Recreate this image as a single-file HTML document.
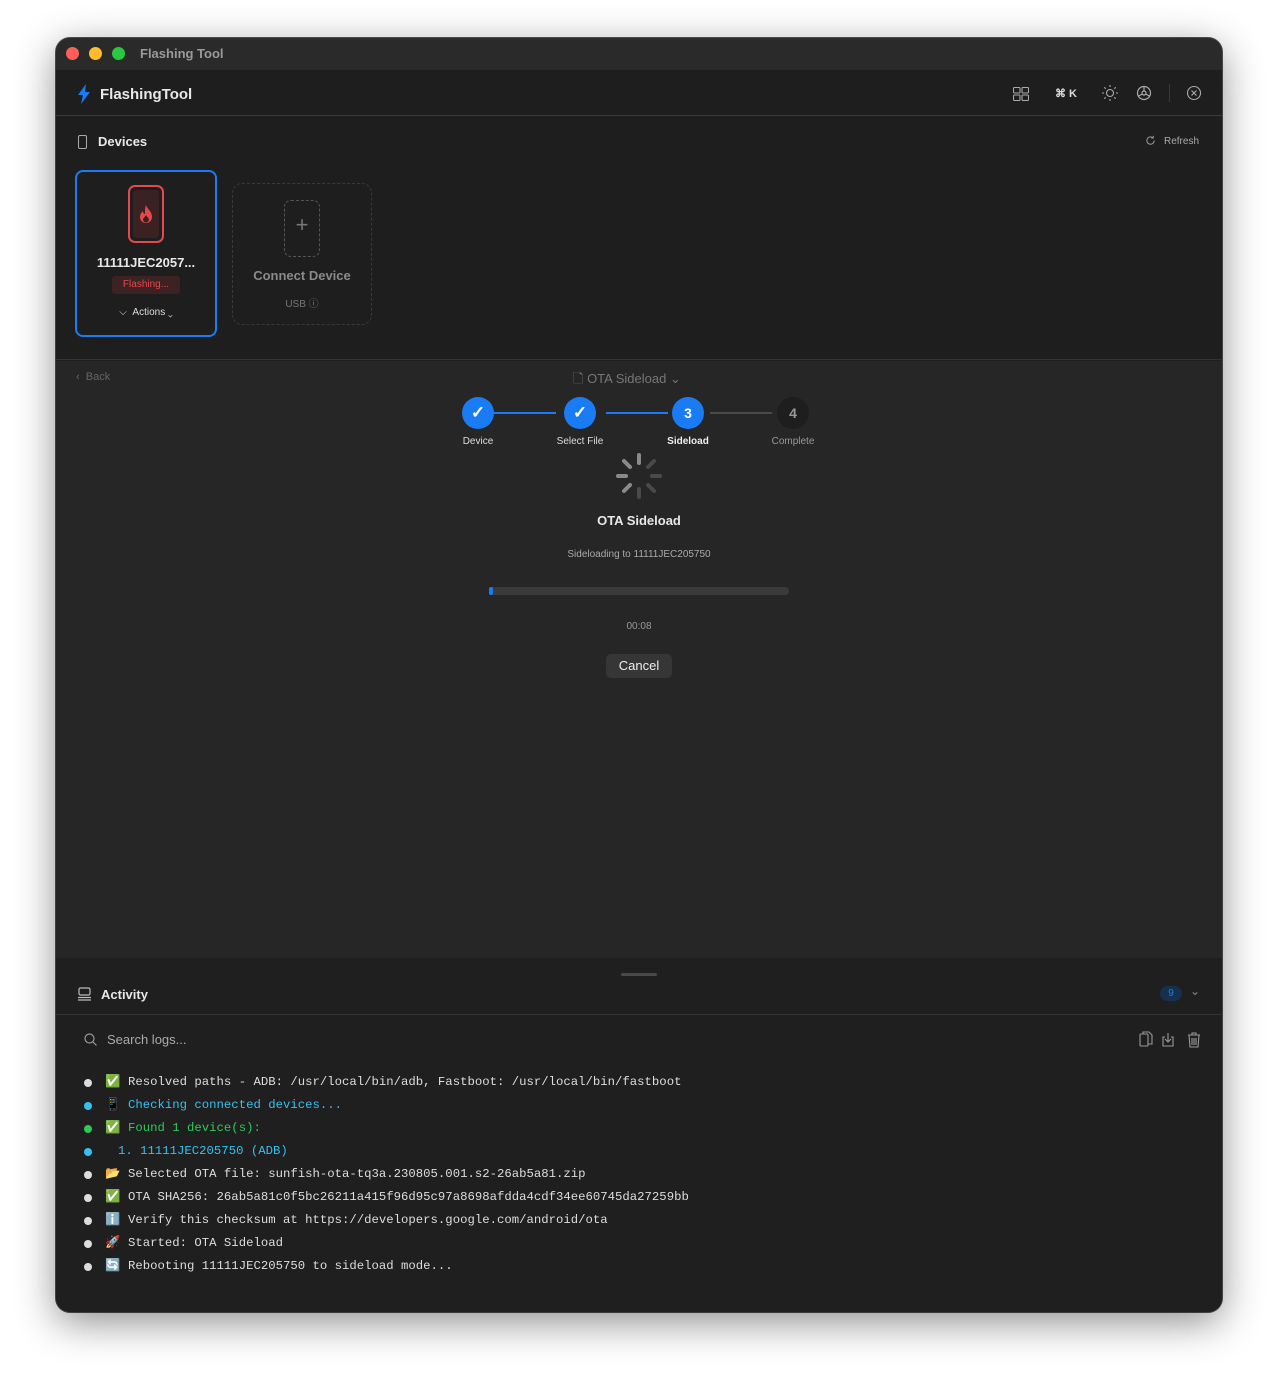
<!DOCTYPE html>
<html><head><meta charset="utf-8"><style>
*{box-sizing:border-box;margin:0;padding:0}
body{width:1278px;height:1387px;background:#fff;font-family:"Liberation Sans",sans-serif;position:relative;overflow:hidden}
.win{position:absolute;left:56px;top:38px;width:1166px;height:1274px;border-radius:14px;background:#1f1f1f;overflow:hidden;box-shadow:0 10px 40px rgba(0,0,0,.45),0 0 0 1px #555}
.abs{position:absolute}
.t{color:#e8e8e8}
.mono{font-family:"Liberation Mono",monospace}
</style></head><body>
<div class="win">
 <div class="abs" style="left:0;top:0;width:1166px;height:32px;background:#2a2a2a"></div>
 <div class="abs" style="left:10px;top:9px;width:13px;height:13px;border-radius:50%;background:#fe5f57"></div>
 <div class="abs" style="left:33px;top:9px;width:13px;height:13px;border-radius:50%;background:#febc2e"></div>
 <div class="abs" style="left:56px;top:9px;width:13px;height:13px;border-radius:50%;background:#28c840"></div>
 <div class="abs" style="left:84px;top:8px;font-size:13px;font-weight:bold;color:#9a9a9a">Flashing Tool</div>
 <div class="abs" style="left:0;top:32px;width:1166px;height:46px;background:#1e1e1e;border-bottom:1px solid #3a3a3a"></div>
 <svg class="abs" style="left:20px;top:46px" width="16" height="20" viewBox="0 0 16 20"><path d="M10 0 L2 11 H7 L5 20 L14 8 H9 Z" fill="#1a7cf5"/></svg>
 <div class="abs t" style="left:44px;top:48px;font-size:15px;font-weight:bold">FlashingTool</div>
 <svg class="abs" style="left:957px;top:49px" width="16" height="14" viewBox="0 0 16 14" fill="none" stroke="#aaa" stroke-width="1.1"><rect x=".5" y=".5" width="6.5" height="5.5" rx="1"/><rect x="9" y=".5" width="6.5" height="5.5" rx="1"/><rect x=".5" y="8" width="6.5" height="5.5" rx="1"/><rect x="9" y="8" width="6.5" height="5.5" rx="1"/></svg>
 <div class="abs" style="left:999px;top:49px;font-size:11px;color:#ddd;font-weight:bold">⌘ K</div>
 <svg class="abs" style="left:1046px;top:47px" width="16" height="16" viewBox="0 0 16 16" stroke="#aaa" stroke-width="1.1" fill="none"><circle cx="8" cy="8" r="3.5"/><path d="M8 0v2M8 14v2M0 8h2M14 8h2M2.3 2.3l1.4 1.4M12.3 12.3l1.4 1.4M2.3 13.7l1.4-1.4M12.3 3.7l1.4-1.4"/></svg>
 <svg class="abs" style="left:1080px;top:47px" width="16" height="16" viewBox="0 0 16 16" stroke="#aaa" stroke-width="1.2" fill="none"><circle cx="8" cy="8" r="6.5"/><circle cx="8" cy="8" r="2"/><path d="M8 1.5v4.5M2.5 11l4-2M13.5 11l-4-2"/></svg>
 <div class="abs" style="left:1113px;top:46px;width:1px;height:18px;background:#3a3a3a"></div>
 <svg class="abs" style="left:1130px;top:47px" width="16" height="16" viewBox="0 0 16 16" stroke="#aaa" stroke-width="1.1" fill="none"><circle cx="8" cy="8" r="6.5"/><path d="M5.5 5.5l5 5M10.5 5.5l-5 5"/></svg>
 <div class="abs" style="left:0;top:79px;width:1166px;height:243px;background:#1e1e1e;border-bottom:1px solid #333"></div>
 <div class="abs" style="left:22px;top:97px;width:9px;height:14px;border:1.5px solid #aaa;border-radius:2px"></div>
 <div class="abs t" style="left:42px;top:96px;font-size:13px;font-weight:bold">Devices</div>
 <svg class="abs" style="left:1089px;top:97px" width="11" height="11" viewBox="0 0 12 12" fill="none" stroke="#999" stroke-width="1.1"><path d="M10 6a4 4 0 1 1-1.5-3.1M9 1v2.2H6.8"/></svg>
 <div class="abs" style="left:1108px;top:98px;font-size:10px;color:#aaa">Refresh</div>
 <div class="abs" style="left:19px;top:132px;width:142px;height:167px;border:2px solid #1a7cf5;border-radius:8px"></div>
 <div class="abs" style="left:72px;top:147px;width:36px;height:58px;border:2px solid #e5484d;border-radius:7px;background:#1e1e1e"></div>
 <div class="abs" style="left:77px;top:152px;width:26px;height:48px;border-radius:4px;background:#3b2222"></div>
 <svg class="abs" style="left:82px;top:166px" width="16" height="20" viewBox="0 0 16 20"><path d="M8 1C9 5 14 7 14 13a6 6 0 0 1-12 0c0-3 2-5 3-6 0 2 1 3 2 3 0-4 0-6 1-9z" fill="#e5484d"/><path d="M8 11c1 2 3 3 3 4.5a3 3 0 0 1-6 0C5 14 7 13 8 11z" fill="#3b2222"/></svg>
 <div class="abs t" style="left:19px;top:217px;width:142px;text-align:center;font-size:13px;font-weight:bold">11111JEC2057...</div>
 <div class="abs" style="left:56px;top:238px;width:68px;height:18px;border-radius:3px;background:#3d2224;color:#e5484d;font-size:10px;text-align:center;line-height:18px">Flashing...</div>
 <div class="abs" style="left:19px;top:269px;width:142px;text-align:center;font-size:10px;color:#ddd">⌵ &nbsp;Actions ⌄</div>
 <div class="abs" style="left:176px;top:145px;width:140px;height:142px;border:1.5px dashed #3a3a3a;border-radius:10px"></div>
 <div class="abs" style="left:228px;top:162px;width:36px;height:57px;border:1.5px dashed #555;border-radius:7px"></div>
 <div class="abs" style="left:238px;top:174px;font-size:22px;color:#777;width:16px;text-align:center">+</div>
 <div class="abs" style="left:176px;top:230px;width:140px;text-align:center;font-size:13px;color:#8a8a8a;font-weight:bold">Connect Device</div>
 <div class="abs" style="left:176px;top:257px;width:140px;text-align:center;font-size:10px;color:#777">USB ⓘ</div>
 <div class="abs" style="left:0;top:323px;width:1166px;height:597px;background:#262626"></div>
 <div class="abs" style="left:20px;top:333px;font-size:11px;color:#666">‹ &nbsp;Back</div>
 <div class="abs" style="left:517px;top:332px;font-size:13px;color:#777">🗋 OTA Sideload ⌄</div>
 <div class="abs" style="left:438px;top:374px;width:62px;height:2px;background:#1a7cf5"></div>
 <div class="abs" style="left:550px;top:374px;width:62px;height:2px;background:#1a7cf5"></div>
 <div class="abs" style="left:654px;top:374px;width:62px;height:2px;background:#4a4a4a"></div>
 <div class="abs" style="left:406px;top:359px;width:32px;height:32px;border-radius:50%;background:#1a7cf5;color:#fff;text-align:center;line-height:32px;font-size:17px;font-weight:bold">✓</div>
 <div class="abs" style="left:508px;top:359px;width:32px;height:32px;border-radius:50%;background:#1a7cf5;color:#fff;text-align:center;line-height:32px;font-size:17px;font-weight:bold">✓</div>
 <div class="abs" style="left:616px;top:359px;width:32px;height:32px;border-radius:50%;background:#1a7cf5;color:#fff;text-align:center;line-height:32px;font-size:14px;font-weight:bold">3</div>
 <div class="abs" style="left:721px;top:359px;width:32px;height:32px;border-radius:50%;background:#1e1e1e;color:#999;text-align:center;line-height:32px;font-size:14px;font-weight:bold">4</div>
 <div class="abs" style="left:382px;top:398px;width:80px;text-align:center;font-size:10px;color:#ddd">Device</div>
 <div class="abs" style="left:484px;top:398px;width:80px;text-align:center;font-size:10px;color:#ddd">Select File</div>
 <div class="abs" style="left:592px;top:398px;width:80px;text-align:center;font-size:10px;color:#eee;font-weight:bold">Sideload</div>
 <div class="abs" style="left:697px;top:398px;width:80px;text-align:center;font-size:10px;color:#999">Complete</div>
 <svg class="abs" style="left:558px;top:414px" width="50" height="48" viewBox="-25 -24 50 48" stroke-width="4" stroke-linecap="round">
  <g stroke="#8a8a8a"><line x1="0" y1="-21" x2="0" y2="-13"/><line x1="-21" y1="0" x2="-13" y2="0"/><line x1="-15" y1="-15" x2="-9" y2="-9"/><line x1="-15" y1="15" x2="-9" y2="9"/></g>
  <g stroke="#4a4a4a"><line x1="15" y1="-15" x2="9" y2="-9"/><line x1="21" y1="0" x2="13" y2="0"/><line x1="15" y1="15" x2="9" y2="9"/><line x1="0" y1="21" x2="0" y2="13"/></g></svg>
 <div class="abs t" style="left:483px;top:475px;width:200px;text-align:center;font-size:13px;font-weight:bold">OTA Sideload</div>
 <div class="abs" style="left:433px;top:511px;width:300px;text-align:center;font-size:10px;color:#aaa">Sideloading to 11111JEC205750</div>
 <div class="abs" style="left:433px;top:549px;width:300px;height:8px;border-radius:4px;background:#3a3a3a"></div>
 <div class="abs" style="left:433px;top:549px;width:4px;height:8px;border-radius:3px;background:#1a7cf5"></div>
 <div class="abs" style="left:533px;top:583px;width:100px;text-align:center;font-size:10px;color:#999">00:08</div>
 <div class="abs" style="left:550px;top:616px;width:66px;height:24px;border-radius:5px;background:#363636;color:#eee;font-size:13px;text-align:center;line-height:24px">Cancel</div>
 <div class="abs" style="left:0;top:920px;width:1166px;height:354px;background:#1f1f1f"></div>
 <div class="abs" style="left:565px;top:935px;width:36px;height:3px;border-radius:2px;background:#4a4a4a"></div>
 <svg class="abs" style="left:22px;top:949px" width="13" height="14" viewBox="0 0 13 14" fill="none" stroke="#bbb" stroke-width="1.2"><rect x="1" y="1" width="11" height="7" rx="1.5"/><path d="M0 10.5h13M0 13h13"/></svg>
 <div class="abs t" style="left:45px;top:949px;font-size:13px;font-weight:bold">Activity</div>
 <div class="abs" style="left:1104px;top:948px;width:22px;height:15px;border-radius:8px;background:#16304f;color:#1a7cf5;font-size:10px;text-align:center;line-height:15px">9</div>
 <div class="abs" style="left:1134px;top:946px;font-size:12px;color:#888">⌄</div>
 <div class="abs" style="left:0;top:976px;width:1166px;height:1px;background:#333"></div>
 <svg class="abs" style="left:28px;top:995px" width="13" height="13" viewBox="0 0 13 13" fill="none" stroke="#999" stroke-width="1.2"><circle cx="5.5" cy="5.5" r="4.5"/><path d="M9 9l3.5 3.5"/></svg>
 <div class="abs" style="left:51px;top:994px;font-size:13px;color:#aaa">Search logs...</div>
 <svg class="abs" style="left:1083px;top:993px" width="72" height="17" viewBox="0 0 72 17" fill="none" stroke="#999" stroke-width="1.1"><rect x="1" y="3" width="8" height="12" rx="1"/><path d="M4 3V1h6l3 3v9H9"/><path d="M26 6h-2v9h10V6h-2M29 2v9M26 8l3 3 3-3"/><path d="M49 4h12M53 4V2h4v2M50 4l1 12h8l1-12M53 7v7M55 7v7M57 7v7"/></svg>
 <div class="abs mono" style="left:0;top:1033px;width:1166px;font-size:12.3px;line-height:23px">
  <div style="position:relative;padding-left:50px;color:#ddd"><span style="position:absolute;left:28px;top:8px;width:8px;height:8px;border-radius:50%;background:#ddd"></span><span style="position:absolute;left:49px">✅</span><span style="padding-left:22px">Resolved paths - ADB: /usr/local/bin/adb, Fastboot: /usr/local/bin/fastboot</span></div>
  <div style="position:relative;padding-left:50px;color:#35c0f0"><span style="position:absolute;left:28px;top:8px;width:8px;height:8px;border-radius:50%;background:#35c0f0"></span><span style="position:absolute;left:49px">📱</span><span style="padding-left:22px">Checking connected devices...</span></div>
  <div style="position:relative;padding-left:50px;color:#2ec95a"><span style="position:absolute;left:28px;top:8px;width:8px;height:8px;border-radius:50%;background:#2ec95a"></span><span style="position:absolute;left:49px">✅</span><span style="padding-left:22px">Found 1 device(s):</span></div>
  <div style="position:relative;padding-left:62px;color:#35c0f0"><span style="position:absolute;left:28px;top:8px;width:8px;height:8px;border-radius:50%;background:#35c0f0"></span>1. 11111JEC205750 (ADB)</div>
  <div style="position:relative;padding-left:50px;color:#ddd"><span style="position:absolute;left:28px;top:8px;width:8px;height:8px;border-radius:50%;background:#ddd"></span><span style="position:absolute;left:49px">📂</span><span style="padding-left:22px">Selected OTA file: sunfish-ota-tq3a.230805.001.s2-26ab5a81.zip</span></div>
  <div style="position:relative;padding-left:50px;color:#ddd"><span style="position:absolute;left:28px;top:8px;width:8px;height:8px;border-radius:50%;background:#ddd"></span><span style="position:absolute;left:49px">✅</span><span style="padding-left:22px">OTA SHA256: 26ab5a81c0f5bc26211a415f96d95c97a8698afdda4cdf34ee60745da27259bb</span></div>
  <div style="position:relative;padding-left:50px;color:#ddd"><span style="position:absolute;left:28px;top:8px;width:8px;height:8px;border-radius:50%;background:#ddd"></span><span style="position:absolute;left:49px">ℹ️</span><span style="padding-left:22px">Verify this checksum at https://developers.google.com/android/ota</span></div>
  <div style="position:relative;padding-left:50px;color:#ddd"><span style="position:absolute;left:28px;top:8px;width:8px;height:8px;border-radius:50%;background:#ddd"></span><span style="position:absolute;left:49px">🚀</span><span style="padding-left:22px">Started: OTA Sideload</span></div>
  <div style="position:relative;padding-left:50px;color:#ddd"><span style="position:absolute;left:28px;top:8px;width:8px;height:8px;border-radius:50%;background:#ddd"></span><span style="position:absolute;left:49px">🔄</span><span style="padding-left:22px">Rebooting 11111JEC205750 to sideload mode...</span></div>
 </div>
</div>
</body></html>
